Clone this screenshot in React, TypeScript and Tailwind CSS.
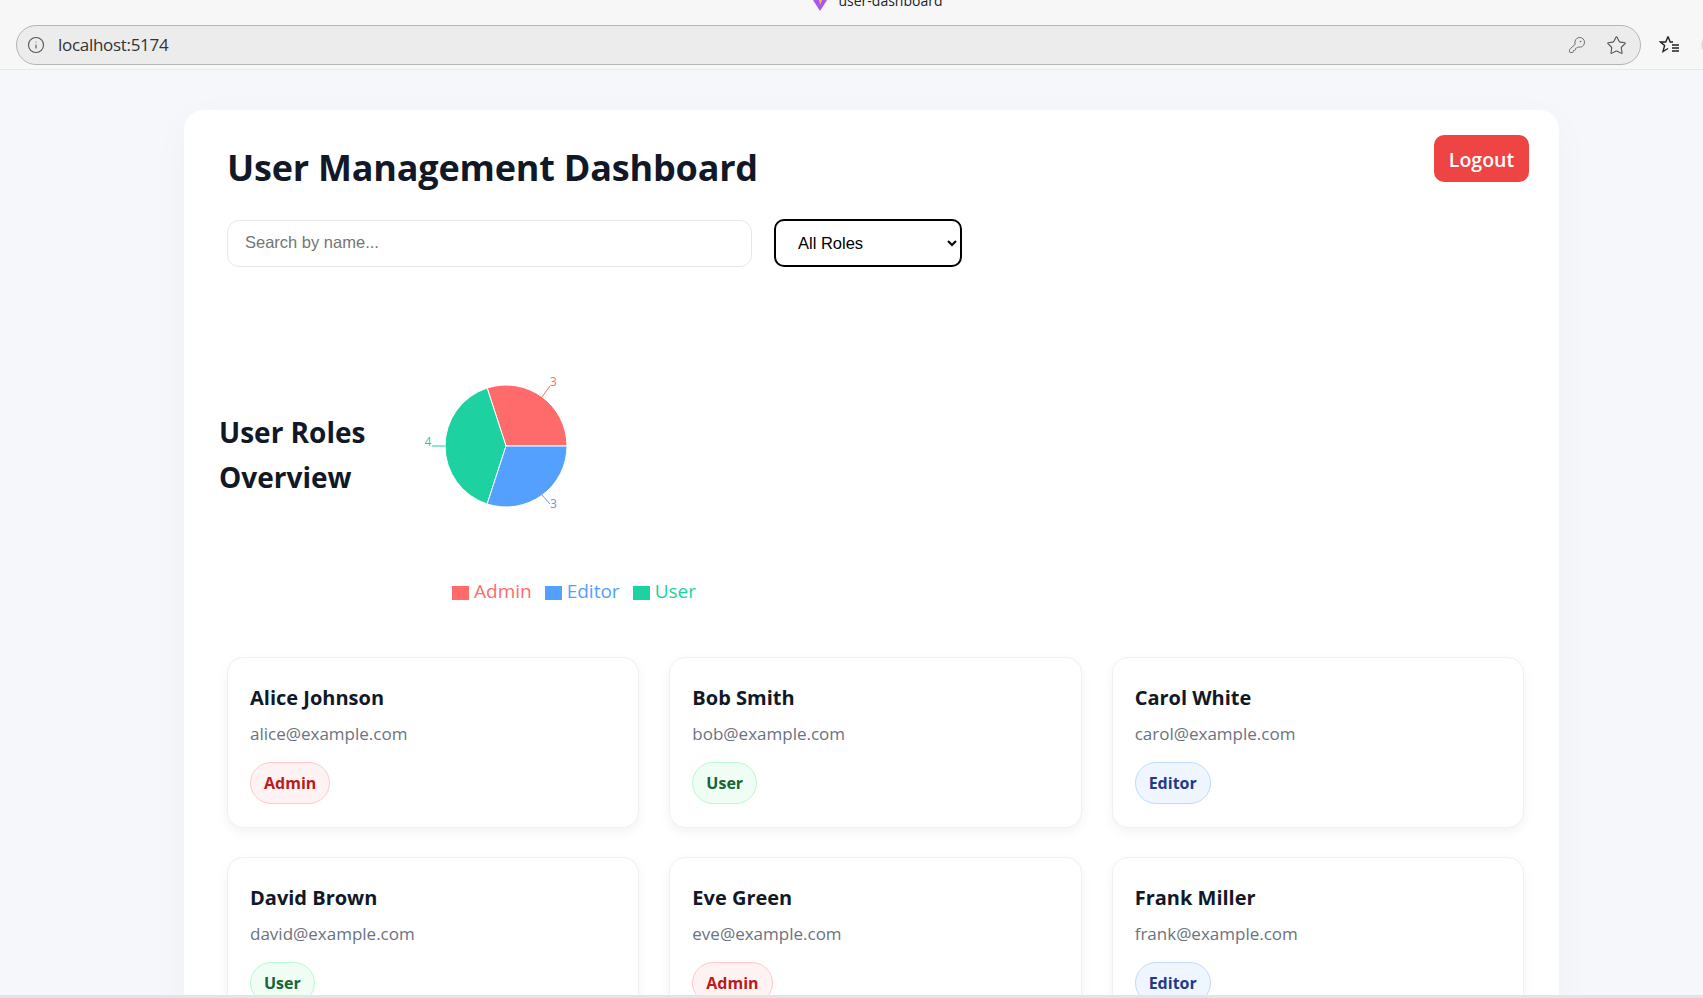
import { Info, KeyRound, Star } from 'lucide-react'

const ROLE_STYLES = {
  Admin: 'bg-[#fef2f2] border-[#fecaca] text-[#b91c1c]',
  User: 'bg-[#f0fdf4] border-[#bbf7d0] text-[#166534]',
  Editor: 'bg-[#eff6ff] border-[#bfdbfe] text-[#1e3a8a]',
} as const

type Role = keyof typeof ROLE_STYLES

const USERS: { name: string; email: string; role: Role }[] = [
  { name: 'Alice Johnson', email: 'alice@example.com', role: 'Admin' },
  { name: 'Bob Smith', email: 'bob@example.com', role: 'User' },
  { name: 'Carol White', email: 'carol@example.com', role: 'Editor' },
  { name: 'David Brown', email: 'david@example.com', role: 'User' },
  { name: 'Eve Green', email: 'eve@example.com', role: 'Admin' },
  { name: 'Frank Miller', email: 'frank@example.com', role: 'Editor' },
]

function BrowserBar() {
  return (
    <div className="h-[70px] shrink-0 overflow-hidden border-b border-[#e8e8e8] bg-[#f7f7f7]">
      <div className="flex h-[25px] items-start justify-center pl-[53px]">
        <svg width="14" height="11" viewBox="0 0 14 11" className="mr-[11px]">
          <path d="M0 0H14L7 11Z" fill="#a855f7" />
          <path d="M6 0H9L7 5Z" fill="#fbbf24" />
        </svg>
        <span className="-mt-[9px] font-['Open_Sans'] text-sm leading-5 text-[#222]">user-dashboard</span>
      </div>
      <div className="flex items-center">
        <div className="ml-[16px] flex h-[40px] w-[1625px] shrink-0 items-center rounded-full border border-[#b5b5b5] bg-[#ececec] pl-[10px] pr-[13px]">
          <Info size={18} strokeWidth={1.5} className="text-[#555]" />
          <span className="ml-[13px] font-['Open_Sans'] text-[17px] tracking-[-0.3px] text-[#333]">localhost:5174</span>
          <KeyRound size={18} strokeWidth={1.25} className="ml-auto text-[#666]" />
          <Star size={21} strokeWidth={1.25} className="ml-[20px] text-[#555]" />
        </div>
        <svg width="22" height="22" viewBox="0 0 22 22" fill="none" stroke="#222" strokeWidth="1.4" className="ml-[18px] shrink-0">
          <path d="M9 2.5 11.2 8H14M9 2.5 6.8 8H1.5L5.6 11.4 4 17.5 9 14.5" />
          <path d="M13 11H20M13 14H20M13 17H20" />
        </svg>
        <div className="ml-[20px] h-5 w-5 shrink-0 rounded-full bg-[#dedede]" />
      </div>
    </div>
  )
}

function RolePie() {
  return (
    <svg width="400" height="272" viewBox="0 0 400 272" className="block">
      <path d="M132 141 L193 141 A61 61 0 0 0 113.15 83 Z" fill="#ff6b6b" stroke="#fff" />
      <path d="M132 141 L113.15 83 A61 61 0 0 0 113.15 199 Z" fill="#1dd1a1" stroke="#fff" />
      <path d="M132 141 L113.15 199 A61 61 0 0 0 193 141 Z" fill="#54a0ff" stroke="#fff" />
      <path d="M168 92 L176 81" stroke="#ff6b6b" fill="none" />
      <path d="M168 190 L176 199" stroke="#54a0ff" fill="none" />
      <path d="M71 141 H58" stroke="#1dd1a1" fill="none" />
      <text x="176" y="81" fontSize="12" fill="#ff6b6b">3</text>
      <text x="176" y="203" fontSize="12" fill="#54a0ff">3</text>
      <text x="54" y="141" fontSize="12" fill="#1dd1a1" textAnchor="middle">4</text>
    </svg>
  )
}

function LegendItem({ label, square, text }: { label: string; square: string; text: string }) {
  return (
    <div className={`flex items-center gap-[5px] text-[19px] leading-7 ${text}`}>
      <span className={`mt-[3px] h-[14px] w-[17px] ${square}`} />
      {label}
    </div>
  )
}

function UserCard({ name, email, role }: { name: string; email: string; role: Role }) {
  return (
    <div className="h-[171px] rounded-2xl border border-[#f0f0f2] bg-white px-[22px] pt-[26px] shadow-[0_4px_12px_rgba(0,0,0,0.05)]">
      <h3 className="text-xl font-bold leading-7 text-[#111827]">{name}</h3>
      <p className="mt-[8px] text-[17px] leading-7 text-[#6b7280]">{email}</p>
      <span className={`mt-[14px] inline-flex h-[42px] items-center rounded-full border px-[13px] text-base font-bold ${ROLE_STYLES[role]}`}>
        {role}
      </span>
    </div>
  )
}

export default function App() {
  return (
    <div className="flex h-screen flex-col overflow-hidden bg-[#f5f7fb] font-['Open_Sans','Noto_Sans',sans-serif]">
      <BrowserBar />
      <div className="min-h-0 flex-1 overflow-hidden pl-[184px] pr-[144px] pt-[40px]">
        <div className="relative rounded-[20px] bg-white pb-10 pl-[43px] pr-[35px] pt-[33px] shadow-[0_10px_40px_rgba(0,0,0,0.03)]">
          <button className="absolute right-[30px] top-[25px] h-[47px] w-[95px] rounded-[10px] bg-[#ef4444] pt-[2px] text-[19.5px] font-semibold text-white">
            Logout
          </button>
          <h1 className="text-[36px] font-bold leading-[50px] tracking-[-0.2px] text-[#111827]">User Management Dashboard</h1>
          <div className="mt-[26px] flex items-center gap-[22px]">
            <input
              placeholder="Search by name..."
              className="h-[47px] w-[525px] rounded-xl border border-[#e5e7eb] bg-white px-[17px] pb-[2px] font-['Liberation_Sans'] text-[16.5px] outline-none placeholder:text-[#757575]"
            />
            <select className="h-[48px] w-[188px] rounded-[10px] border-2 border-black bg-white px-[18px] font-['Liberation_Sans'] text-[16.5px] text-black">
              <option>All Roles</option>
            </select>
          </div>
          <div className="mt-[38px] flex h-[300px] items-center">
            <h2 className="-ml-2 w-[155px] shrink-0 text-[28px] font-bold leading-[45px] text-[#111827]">User Roles Overview</h2>
            <div className="w-[400px]">
              <RolePie />
              <div className="flex justify-center gap-[13px]">
                <LegendItem label="Admin" square="bg-[#ff6b6b]" text="text-[#ff6b6b]" />
                <LegendItem label="Editor" square="bg-[#54a0ff]" text="text-[#54a0ff]" />
                <LegendItem label="User" square="bg-[#1dd1a1]" text="text-[#1dd1a1]" />
              </div>
            </div>
          </div>
          <div className="mt-[52px] grid grid-cols-3 gap-x-[30px] gap-y-[29px]">
            {USERS.map((u) => (
              <UserCard key={u.email} {...u} />
            ))}
          </div>
        </div>
      </div>
      <div className="h-[3px] shrink-0 bg-[#e4e4e4]" />
    </div>
  )
}
